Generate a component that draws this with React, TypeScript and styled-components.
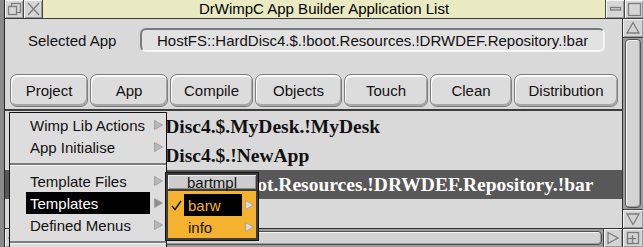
import React from 'react';
import styled, { createGlobalStyle } from 'styled-components';

const GlobalStyle = createGlobalStyle`
  html, body {
    margin: 0;
    padding: 0;
    background: #858585;
  }
  body {
    font-family: "Liberation Sans", Arial, sans-serif;
  }
  * {
    box-sizing: border-box;
  }
`;

const buttons = [
  { label: 'Project', width: 78 },
  { label: 'App', width: 78 },
  { label: 'Compile', width: 83 },
  { label: 'Objects', width: 87 },
  { label: 'Touch', width: 84 },
  { label: 'Clean', width: 82 },
  { label: 'Distribution', width: 104 },
];

const rows = [
  'HostFS::HardDisc4.$.MyDesk.!MyDesk',
  'HostFS::HardDisc4.$.!NewApp',
  'HostFS::HardDisc4.$.!boot.Resources.!DRWDEF.Repository.!bar',
];

const Screen = styled.div`
  position: relative;
  width: 643px;
  height: 247px;
  overflow: hidden;
  display: flex;
  background: #858585;
`;

const DeskStrip = styled.div`
  width: 4px;
  background: #8a8a8a;
`;

const Window = styled.div`
  flex: 1;
  display: flex;
  flex-direction: column;
  border-left: 1px solid #262626;
  background: #d9d9d9;
`;

const TitleBar = styled.div`
  height: 19px;
  display: flex;
  border-bottom: 1px solid #3a3a3a;
`;

const TitleIcon = styled.div<{ $left?: boolean }>`
  width: ${p => (p.$left ? '19px' : '19px')};
  display: flex;
  align-items: center;
  justify-content: center;
  background: #d6d6d6;
  box-shadow: inset 1px 1px 0 #f4f4f4, inset -1px -1px 0 #9a9a9a;
  ${p => (p.$left ? 'border-right: 1px solid #4a4a4a;' : 'border-left: 1px solid #4a4a4a;')}
`;

const Title = styled.div`
  flex: 1;
  display: flex;
  align-items: center;
  justify-content: center;
  background: #e9eac2;
  color: #000;
  font-size: 15px;
  line-height: 18px;
`;

const Body = styled.div`
  flex: 1;
  display: flex;
`;

const Main = styled.div`
  flex: 1;
  display: flex;
  flex-direction: column;
  border-right: 1px solid #333;
`;

const Toolbar = styled.div`
  height: 92px;
  padding: 9px 0 0 5px;
  display: flex;
  flex-direction: column;
  border-bottom: 2px solid #3c3c3c;
`;

const SelectedRow = styled.div`
  height: 24px;
  display: flex;
  align-items: center;
`;

const FieldLabel = styled.div`
  width: 112px;
  margin-left: 18px;
  font-size: 15px;
  color: #111;
`;

const Field = styled.div`
  width: 465px;
  height: 24px;
  padding-left: 15px;
  display: flex;
  align-items: center;
  font-size: 15px;
  color: #111;
  background: #e2e2e2;
  border-radius: 6px;
  border: 2px solid;
  border-color: #7a7a7a #f6f6f6 #f6f6f6 #7a7a7a;
  white-space: nowrap;
  overflow: hidden;
`;

const ButtonRow = styled.div`
  margin-top: 22px;
  height: 33px;
  display: flex;
  gap: 2px;
`;

const ActionButton = styled.div<{ $w: number }>`
  width: ${p => p.$w}px;
  height: 33px;
  display: flex;
  align-items: center;
  justify-content: center;
  font-size: 15px;
  color: #111;
  background: #dcdcdc;
  border: 1px solid #7e7e7e;
  border-radius: 7px;
  box-shadow: inset 1px 2px 0 #fbfbfb, inset -1px -2px 0 #a6a6a6;
`;

const List = styled.div`
  flex: 1;
  padding-top: 1px;
  display: flex;
  flex-direction: column;
`;

const ListRow = styled.div<{ $selected?: boolean }>`
  height: 29px;
  padding-left: 41px;
  display: flex;
  align-items: center;
  font-family: "Liberation Serif", "Times New Roman", serif;
  font-weight: bold;
  font-size: 19.5px;
  white-space: nowrap;
  color: ${p => (p.$selected ? '#fff' : '#111')};
  background: ${p => (p.$selected ? '#585858' : 'transparent')};
`;

const HScroll = styled.div`
  height: 19px;
  display: flex;
  border-top: 1px solid #333;
  background: #9c9c9c;
`;

const ScrollArrow = styled.div<{ $side?: 'left' | 'right' | 'top' | 'bottom' }>`
  flex: 0 0 19px;
  display: flex;
  align-items: center;
  justify-content: center;
  background: #d4d4d4;
  box-shadow: inset 1px 1px 0 #f2f2f2, inset -1px -1px 0 #9a9a9a;
  ${p => p.$side && `border-${p.$side}: 1px solid #444;`}
`;

const Trough = styled.div<{ $vertical?: boolean }>`
  flex: 1;
  display: flex;
  flex-direction: ${p => (p.$vertical ? 'column' : 'row')};
  padding: ${p => (p.$vertical ? '1px 2px' : '2px 1px')};
  background: #9c9c9c;
`;

const Slider = styled.div`
  flex: 1;
  background: #d3d3d3;
  border: 1px solid #505050;
  border-radius: 4px;
  box-shadow: inset 1px 1px 0 #f4f4f4, inset -1px -1px 0 #9e9e9e;
`;

const VScroll = styled.div`
  width: 20px;
  display: flex;
  flex-direction: column;
  background: #9c9c9c;
`;

const Menu = styled.div`
  position: absolute;
  left: 9px;
  top: 112px;
  width: 158px;
  padding-top: 1px;
  background: #dddddd;
  border: 1px solid #111;
  border-bottom: none;
  height: 140px;
`;

const MenuItem = styled.div`
  height: 22px;
  display: flex;
  align-items: center;
`;

const TickCell = styled.div<{ $w: number }>`
  width: ${p => p.$w}px;
  height: 100%;
  display: flex;
  align-items: center;
  justify-content: center;
`;

const MenuText = styled.div<{ $w: number; $active?: boolean; $fg?: string }>`
  width: ${p => p.$w}px;
  height: 100%;
  padding-left: 4px;
  display: flex;
  align-items: center;
  font-size: 15px;
  white-space: nowrap;
  color: ${p => (p.$active ? p.$fg || '#fff' : '#111')};
  background: ${p => (p.$active ? '#000' : 'transparent')};
`;

const ArrowCell = styled.div`
  flex: 1;
  height: 100%;
  display: flex;
  align-items: center;
  justify-content: center;
`;

const MenuSeparator = styled.div`
  height: 12px;
  display: flex;
  align-items: center;
  &::after {
    content: '';
    flex: 1;
    height: 2px;
    background: #7c7c7c;
    box-shadow: 0 1px 0 #f4f4f4;
  }
`;

const SubMenu = styled.div`
  position: absolute;
  left: 165px;
  top: 172px;
  width: 94px;
  padding: 2px;
  display: flex;
  flex-direction: column;
  gap: 2px;
  background: #3c3c3c;
  border: 1px solid #111;
`;

const SubTitle = styled.div`
  height: 14px;
  display: flex;
  align-items: center;
  justify-content: center;
  font-size: 15px;
  color: #111;
  background: #cdcdcd;
  box-shadow: inset 1px 1px 0 #f0f0f0, inset -1px -1px 0 #8e8e8e;
`;

const SubBody = styled.div`
  padding: 3px 0 0;
  background: #f5b22e;
`;

const Glyph = ({ children }: { children: React.ReactNode }) => (
  <svg width="16" height="16" viewBox="0 0 16 16" fill="none" stroke="#7c7c7c" strokeWidth="1.3">
    {children}
  </svg>
);

const MenuArrow = ({ fill = '#b4b4b4' }: { fill?: string }) => (
  <svg width="9" height="10" viewBox="0 0 9 10">
    <path d="M0.5 0.5 L8.5 5 L0.5 9.5 Z" fill={fill} stroke="#9a9a9a" strokeWidth="0.8" />
  </svg>
);

const Tick = () => (
  <svg width="11" height="11" viewBox="0 0 11 11">
    <path d="M1 6 L4 9.5 L10 1" fill="none" stroke="#111" strokeWidth="1.4" />
  </svg>
);

const mainItems: ({ label: string; active?: boolean } | null)[] = [
  { label: 'Wimp Lib Actions' },
  { label: 'App Initialise' },
  null,
  { label: 'Template Files' },
  { label: 'Templates', active: true },
  { label: 'Defined Menus' },
  null,
];

export default function App() {
  return (
    <>
      <GlobalStyle />
      <Screen>
        <DeskStrip />
        <Window>
          <TitleBar>
            <TitleIcon $left>
              <Glyph>
                <rect x="5.5" y="2.5" width="9" height="9" />
                <rect x="2.5" y="5.5" width="8" height="8" fill="#d6d6d6" />
              </Glyph>
            </TitleIcon>
            <TitleIcon $left>
              <Glyph>
                <path d="M3 2 L14 14 M14 2 L3 14" />
              </Glyph>
            </TitleIcon>
            <Title>DrWimpC App Builder Application List</Title>
            <TitleIcon>
              <Glyph>
                <rect x="3.5" y="6.5" width="10" height="2.5" />
              </Glyph>
            </TitleIcon>
            <TitleIcon>
              <Glyph>
                <rect x="2.5" y="2.5" width="12" height="12" />
              </Glyph>
            </TitleIcon>
          </TitleBar>
          <Body>
            <Main>
              <Toolbar>
                <SelectedRow>
                  <FieldLabel>Selected App</FieldLabel>
                  <Field>HostFS::HardDisc4.$.!boot.Resources.!DRWDEF.Repository.!bar</Field>
                </SelectedRow>
                <ButtonRow>
                  {buttons.map(b => (
                    <ActionButton key={b.label} $w={b.width}>
                      {b.label}
                    </ActionButton>
                  ))}
                </ButtonRow>
              </Toolbar>
              <List>
                {rows.map((r, i) => (
                  <ListRow key={r} $selected={i === 2}>
                    {r}
                  </ListRow>
                ))}
              </List>
              <HScroll>
                <ScrollArrow $side="right">
                  <Glyph>
                    <path d="M12 2.5 L3 8 L12 13.5 Z" />
                  </Glyph>
                </ScrollArrow>
                <Trough>
                  <Slider />
                </Trough>
                <ScrollArrow $side="left">
                  <Glyph>
                    <path d="M3 2.5 L13 8 L3 13.5 Z" />
                  </Glyph>
                </ScrollArrow>
              </HScroll>
            </Main>
            <VScroll>
              <ScrollArrow $side="bottom">
                <Glyph>
                  <path d="M8 2.5 L14 13 L2 13 Z" />
                </Glyph>
              </ScrollArrow>
              <Trough $vertical>
                <Slider />
              </Trough>
              <ScrollArrow $side="top">
                <Glyph>
                  <path d="M2 3 L14 3 L8 13.5 Z" />
                </Glyph>
              </ScrollArrow>
              <ScrollArrow $side="top">
                <Glyph>
                  <rect x="2.5" y="2.5" width="11" height="11" />
                  <rect x="2.5" y="8.5" width="5" height="5" />
                  <path d="M7.5 8.5 L7.5 5 M7.5 8.5 L11 8.5" />
                </Glyph>
              </ScrollArrow>
            </VScroll>
          </Body>
        </Window>

        <Menu>
          {mainItems.map((item, i) =>
            item ? (
              <MenuItem key={item.label}>
                <TickCell $w={16} />
                <MenuText $w={124} $active={item.active}>
                  {item.label}
                </MenuText>
                <ArrowCell>
                  <MenuArrow fill={item.active ? '#8e8e8e' : '#b8b8b8'} />
                </ArrowCell>
              </MenuItem>
            ) : (
              <MenuSeparator key={'sep' + i} />
            )
          )}
        </Menu>

        <SubMenu>
          <SubTitle>bartmpl</SubTitle>
          <SubBody>
            <MenuItem>
              <TickCell $w={16}>
                <Tick />
              </TickCell>
              <MenuText $w={58} $active $fg="#f5b22e">
                barw
              </MenuText>
              <ArrowCell>
                <MenuArrow fill="#dcdcdc" />
              </ArrowCell>
            </MenuItem>
            <MenuItem>
              <TickCell $w={16} />
              <MenuText $w={58}>info</MenuText>
              <ArrowCell>
                <MenuArrow fill="#dcdcdc" />
              </ArrowCell>
            </MenuItem>
          </SubBody>
        </SubMenu>
      </Screen>
    </>
  );
}
